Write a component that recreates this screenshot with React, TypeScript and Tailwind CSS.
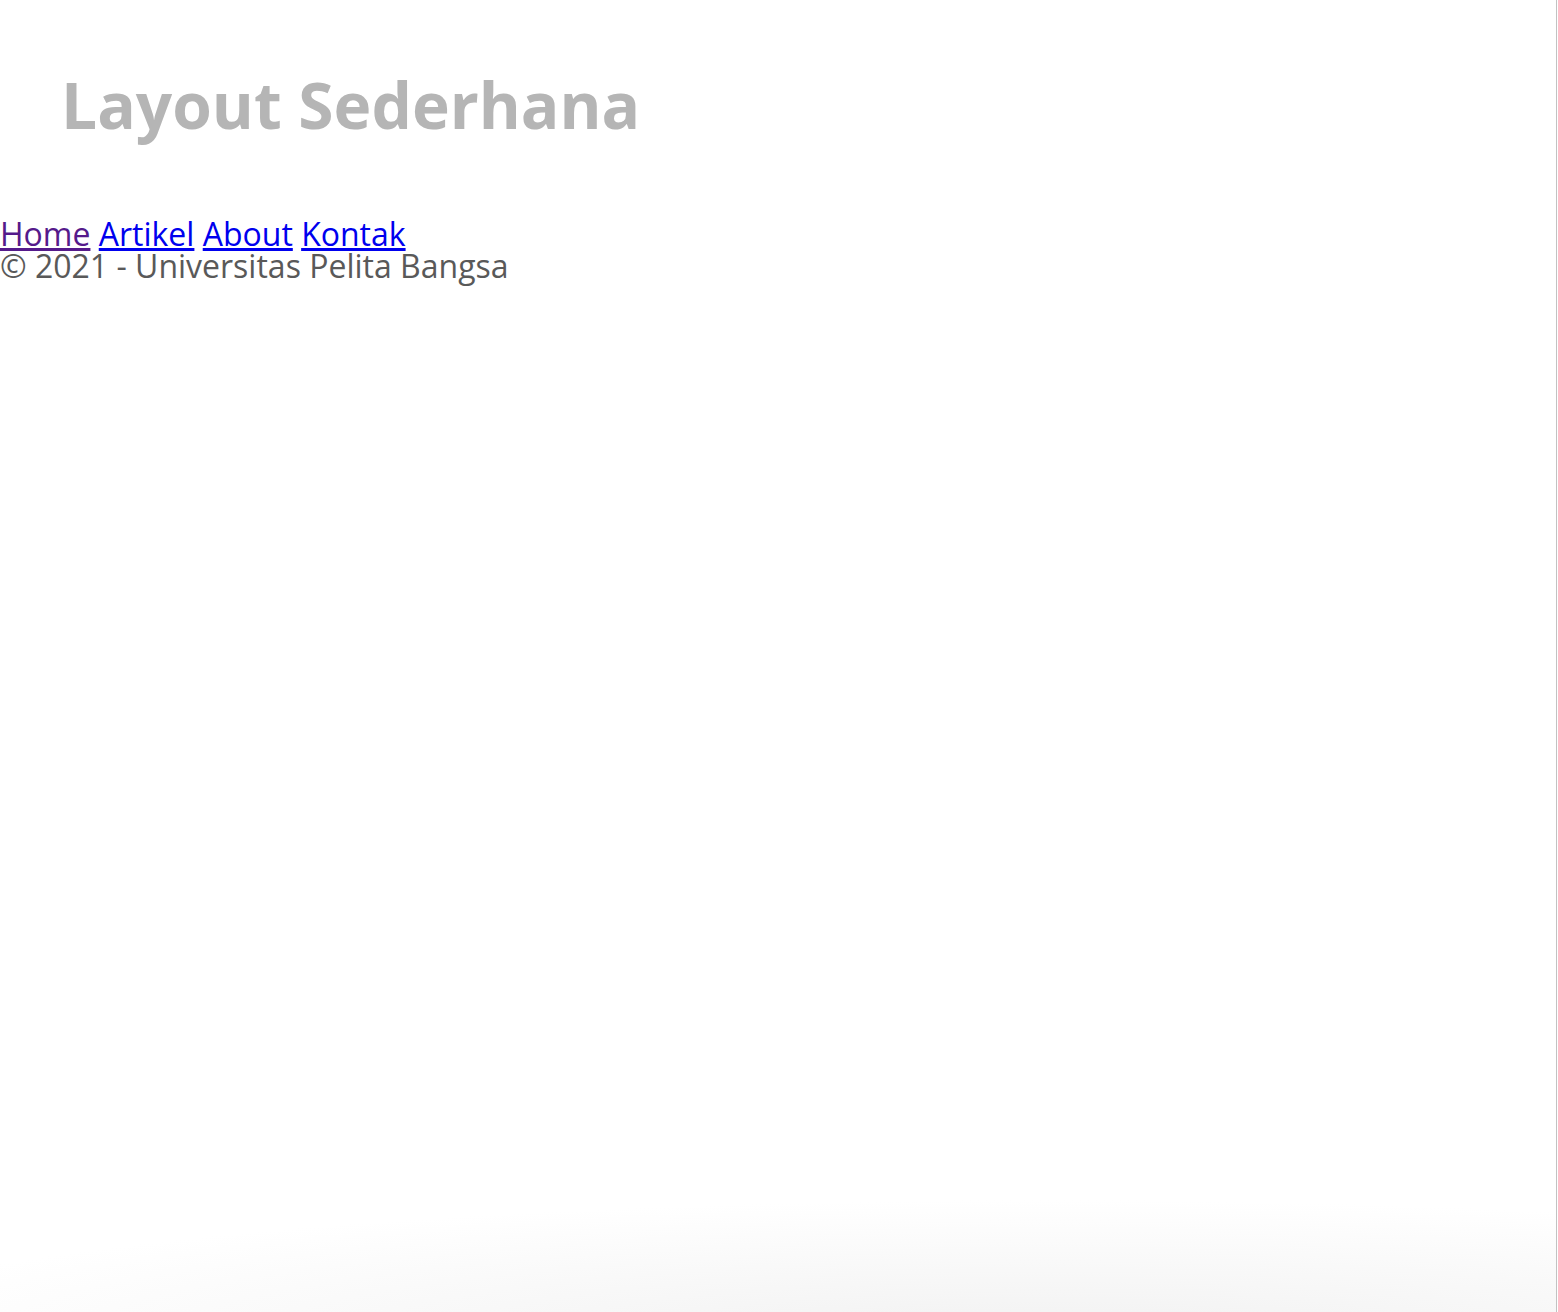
export default function App() {
  return (
    <div className="flex min-h-[1312px] w-[1558px] bg-white">
      <div className="flex min-h-[1312px] w-[1556px] flex-col bg-[radial-gradient(ellipse_1250px_140px_at_1050px_1340px,#f1f1f1,#ffffff)] font-['Open_Sans',sans-serif]">
        <header className="pl-[61px] pt-[73px]">
          <h1 className="text-[64px] font-bold leading-[64px] text-[#b5b5b5]">Layout Sederhana</h1>
        </header>
        <nav className="mt-[81px] text-[32px] leading-[32px]">
          <a href="#" className="text-[#551a8b] underline">Home</a>{' '}
          <a href="#" className="text-[#0000ee] underline">Artikel</a>{' '}
          <a href="#" className="text-[#0000ee] underline">About</a>{' '}
          <a href="#" className="text-[#0000ee] underline">Kontak</a>
        </nav>
        <footer className="text-[32px] leading-[32px] text-[#595959]">
          &copy; 2021 - Universitas Pelita Bangsa
        </footer>
      </div>
      <div className="w-px bg-[#c2c2c2]" />
    </div>
  );
}
